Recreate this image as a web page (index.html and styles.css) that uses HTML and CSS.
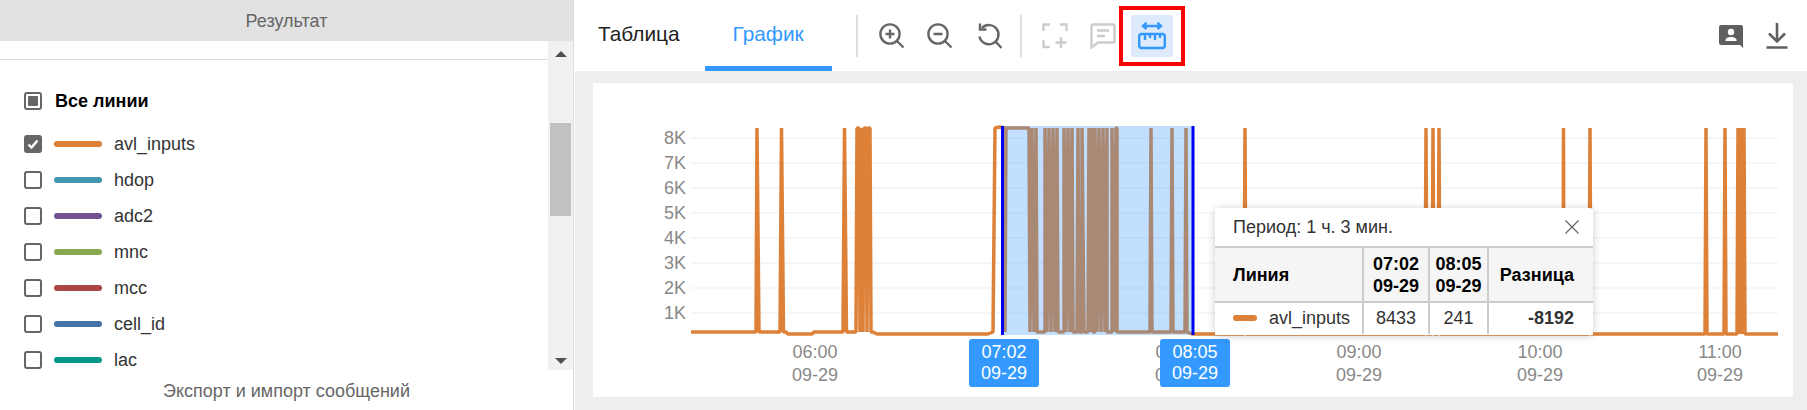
FILE: index.html
```html
<!DOCTYPE html>
<html lang="ru">
<head>
  <meta charset="UTF-8">
  <title>График</title>
  <link rel="stylesheet" href="styles.css">
</head>
<body>
  <aside class="side">
    <div class="side-head">Результат</div>
    <div class="side-body">
      <div class="lines">
        <div class="lines-top"></div>
        <div class="line-row line-all">
          <span class="check check-some"></span>
          <b>Все линии</b>
        </div>
        <div class="line-row">
          <span class="check check-on">
            <svg viewBox="0 0 18 18" width="18" height="18"><path d="M4.5 9.5l3 3 6-7" fill="none" stroke="#fff" stroke-width="2.4"/></svg>
          </span>
          <span class="swatch c-orange"></span>avl_inputs
        </div>
        <div class="line-row"><span class="check"></span><span class="swatch c-teal"></span>hdop</div>
        <div class="line-row"><span class="check"></span><span class="swatch c-purple"></span>adc2</div>
        <div class="line-row"><span class="check"></span><span class="swatch c-green"></span>mnc</div>
        <div class="line-row"><span class="check"></span><span class="swatch c-red"></span>mcc</div>
        <div class="line-row"><span class="check"></span><span class="swatch c-blue"></span>cell_id</div>
        <div class="line-row"><span class="check"></span><span class="swatch c-sea"></span>lac</div>
      </div>
      <div class="scrollbar">
        <span class="arrow arrow-up"></span>
        <span class="thumb"></span>
        <span class="arrow arrow-down"></span>
      </div>
    </div>
    <div class="side-foot">Экспорт и импорт сообщений</div>
  </aside>

  <main class="main">
    <div class="toolbar">
      <div class="tab tab-first">Таблица</div>
      <div class="tab tab-active">График</div>
      <span class="divider divider-a"></span>
      <button class="tool">
        <svg viewBox="0 0 26 26" class="ico"><circle cx="11" cy="11" r="9.6"/><path d="M18 18l6.5 6.5M11 6.5v9M6.500 11h9"/></svg>
      </button>
      <button class="tool">
        <svg viewBox="0 0 26 26" class="ico"><circle cx="11" cy="11" r="9.6"/><path d="M18 18l6.5 6.500M6.500 11h9"/></svg>
      </button>
      <button class="tool">
        <svg viewBox="0 0 26 26" class="ico"><path d="M6 5a9.600 9.600 0 1 1-2.500 8.500"/><path d="M4 .5V6.500h6.500M20 19l5.500 6"/></svg>
      </button>
      <span class="divider divider-b"></span>
      <button class="tool">
        <svg viewBox="0 0 26 26" class="ico ico-off"><path d="M1.500 8V1.500H8M18 1.500h6.500V8M1.500 17v7H8M19 14v11M13.500 19.500h11"/></svg>
      </button>
      <button class="tool">
        <svg viewBox="0 0 26 26" class="ico ico-off"><path d="M3 1.500h20a1.500 1.500 0 0 1 1.500 1.500v15a1.500 1.500 0 0 1-1.500 1.500H8l-6.500 5V3A1.500 1.500 0 0 1 3 1.500zM7 7.500h12M7 13h8"/></svg>
      </button>
      <button class="tool tool-active">
        <svg viewBox="0 0 28 28" class="ico ico-on"><path d="M5 4h18M8.500 .8L5 4l3.500 3.200M19.500 .8L23 4l-3.500 3.200"/><rect x="1.200" y="12" width="25.600" height="14" rx="2.500"/><path d="M7 12v6M12 12v4M17 12v6M22 12v4"/></svg>
        <span class="mark"></span>
      </button>
      <div class="toolbar-right">
        <svg viewBox="0 0 26 26" class="plain"><path d="M3 2h20a2 2 0 0 1 2 2v17.500l.3 3.500-3.300-3H3a2 2 0 0 1-2-2V4a2 2 0 0 1 2-2z" fill="#5f5f5f"/><circle cx="13" cy="9" r="3.200" fill="#fff"/><path d="M7.500 18v-1c0-2 3-3 5.500-3s5.500 1 5.500 3v1z" fill="#fff"/></svg>
        <svg viewBox="0 0 26 26" class="plain"><path d="M13 0v17M5 10.500l8 8 8-8M2.500 24.500h21" fill="none" stroke="#5f5f5f" stroke-width="2.600"/></svg>
      </div>
    </div>

    <div class="content">
      <div class="card">
        <svg class="chart" viewBox="593 83 1200 314" width="1200" height="314">
          <g class="grid">
            <path d="M691 138H1778M691 163H1778M691 188H1778M691 213H1778M691 238H1778M691 263H1778M691 288H1778M691 313H1778"/>
          </g>
          <g class="y-labels">
            <text x="686" y="144">8K</text>
            <text x="686" y="169">7K</text>
            <text x="686" y="194">6K</text>
            <text x="686" y="219">5K</text>
            <text x="686" y="244">4K</text>
            <text x="686" y="269">3K</text>
            <text x="686" y="294">2K</text>
            <text x="686" y="319">1K</text>
          </g>
          <polyline class="series" points="691,332 756,332 757,128 759,332 780,332 781.500,128 783.500,332 786,332 788,334 812,334 814,332 843,332 844.500,128 846.500,332 856,332 857,128 859,128 860,332 861,128 863,332 864,128 866,128 867,332 868,128 870,128 871,332 873,332 877,334 988,334 993,332 995,128 1000,127 1005,128 1005,332 1006,128 1029,128 1030,332 1032,128 1034,332 1036,128 1037,332 1045,332 1045,128 1047,332 1049,128 1051,332 1053,128 1055,332 1057,128 1058,332 1064,332 1064,128 1066,332 1068,128 1070,332 1072,128 1073,332 1077,332 1078,128 1079,332 1082,332 1082,128 1084,332 1088,332 1089,128 1091,332 1092,128 1093,332 1095,332 1095,128 1097,332 1099,128 1101,332 1103,128 1105,332 1107,128 1107,332 1112,332 1112,128 1114,332 1116,128 1117,128 1117,332 1150,332 1151,128 1152,332 1171,332 1172,128 1173,332 1185,332 1186,128 1187,332 1192,334 1244,334 1245,128 1246,334 1425,334 1426,128 1427,334 1432,334 1433,128 1434,334 1438,334 1439,128 1440,334 1563,334 1563.500,128 1564,334 1589,334 1590,128 1591,334 1705,334 1706,128 1707,334 1724,334 1725,128 1726,334 1737,334 1738,128 1740,334 1741,128 1743,334 1744,128 1745,334 1778,334"/>
          <rect class="range" x="1002" y="126" width="192" height="209"/>
          <path class="range-edge" d="M1002.500 126V335M1193 126V335"/>
          <g class="x-labels">
            <text x="815" y="358">06:00</text><text x="815" y="381">09-29</text>
            <text x="1178" y="358">08:00</text><text x="1178" y="381">09-29</text>
            <text x="1359" y="358">09:00</text><text x="1359" y="381">09-29</text>
            <text x="1540" y="358">10:00</text><text x="1540" y="381">09-29</text>
            <text x="1720" y="358">11:00</text><text x="1720" y="381">09-29</text>
          </g>
          <rect class="tag" x="969" y="339" width="70" height="48" rx="3"/>
          <rect class="tag" x="1160" y="339" width="70" height="48" rx="3"/>
          <g class="tag-text">
            <text x="1004" y="358">07:02</text><text x="1004" y="379">09-29</text>
            <text x="1195" y="358">08:05</text><text x="1195" y="379">09-29</text>
          </g>
        </svg>

        <div class="period">
          <div class="period-head">
            <span>Период: 1 ч. 3 мин.</span>
            <svg viewBox="0 0 16 16" width="16" height="16"><path d="M1.500 1.500l13 13M14.500 1.500l-13 13" fill="none" stroke="#666" stroke-width="1.300"/></svg>
          </div>
          <table class="period-table">
            <thead>
              <tr>
                <th class="col-line">Линия</th>
                <th class="col-time">07:02<br>09-29</th>
                <th class="col-time2">08:05<br>09-29</th>
                <th class="col-diff">Разница</th>
              </tr>
            </thead>
            <tbody>
              <tr>
                <td class="col-line"><span class="swatch swatch-sm c-orange"></span>avl_inputs</td>
                <td>8433</td>
                <td>241</td>
                <td class="col-diff"><b>-8192</b></td>
              </tr>
            </tbody>
          </table>
        </div>
      </div>
    </div>
  </main>
</body>
</html>
```

FILE: styles.css
```css
* { box-sizing: border-box; margin: 0; padding: 0; }
html, body { height: 410px; overflow: hidden; }
body {
  display: flex;
  background: #fff;
  color: #333;
  font-family: "Liberation Sans", Arial, sans-serif;
  font-size: 18px;
}

/* левая панель */
.side {
  width: 574px;
  flex: none;
  display: flex;
  flex-direction: column;
  border-right: 1px solid #ddd;
}
.side-head {
  height: 41px;
  line-height: 42px;
  background: #e2e2e2;
  color: #666;
  text-align: center;
  font-size: 18px;
}
.side-body { display: flex; height: 329px; }
.lines { flex: 1; overflow: hidden; }
.lines-top { height: 19px; border-bottom: 1px solid #ddd; margin-bottom: 23px; }
.line-row {
  display: flex;
  align-items: center;
  height: 36px;
  padding-left: 24px;
  color: #333;
}
.line-all { margin-bottom: 7px; color: #000; }
.line-all b { margin-left: 13px; }
.check {
  width: 18px;
  height: 18px;
  flex: none;
  border: 2px solid #666;
  border-radius: 3px;
  position: relative;
}
.check-on { background: #666; }
.check-on svg { display: block; margin: -2px; }
.check-some::after {
  content: "";
  position: absolute;
  inset: 2px;
  background: #666;
  border-radius: 1px;
}
.swatch {
  width: 48px;
  height: 6px;
  flex: none;
  border-radius: 3px;
  margin: 0 12px;
}
.swatch-sm { display: inline-block; width: 24px; margin: 0 12px 0 0; vertical-align: middle; position: relative; top: -1px; }
.c-orange { background: #dd8138; }
.c-teal { background: #3f98b0; }
.c-purple { background: #705390; }
.c-green { background: #8aa84f; }
.c-red { background: #aa4643; }
.c-blue { background: #4572a7; }
.c-sea { background: #009688; }

.scrollbar {
  width: 25px;
  flex: none;
  background: #f1f1f1;
  display: flex;
  flex-direction: column;
  align-items: center;
  position: relative;
}
.thumb {
  width: 21px;
  height: 93px;
  margin-top: 66px;
  background: #c1c1c1;
}
.arrow { width: 0; height: 0; border-left: 6px solid transparent; border-right: 6px solid transparent; }
.arrow-up { border-bottom: 6px solid #505050; margin-top: 10px; }
.arrow-down { border-top: 6px solid #505050; margin-top: 142px; }
.side-foot {
  flex: 1;
  text-align: center;
  color: #666;
  font-size: 18px;
  line-height: 42px;
}

/* правая часть */
.main { flex: 1; display: flex; flex-direction: column; min-width: 0; }
.toolbar { height: 71px; display: flex; align-items: center; flex: none; }
.tab {
  height: 71px;
  line-height: 68px;
  padding: 0 28px;
  font-size: 20.800px;
  color: #222;
}
.tab-first { padding: 0 25px 0 24px; }
.tab-active { color: #3399ff; border-bottom: 5px solid #3399ff; }
.divider { width: 2px; height: 42px; background: #ddd; flex: none; }
.divider-a { margin: 0 13px 0 24px; }
.divider-b { margin: 0 12px 0 10px; }
.tool {
  width: 42px;
  height: 42px;
  margin-right: 6.5px;
  border: 0;
  border-radius: 3px;
  background: none;
  display: flex;
  align-items: center;
  justify-content: center;
  position: relative;
}
.tool:nth-of-type(3) { margin-right: 0; }
.tool-active { background: #deebfc; margin-right: 0; }
.ico {
  width: 26px;
  height: 26px;
  fill: none;
  stroke: #666;
  stroke-width: 2.400;
}
.ico-off { stroke: #ccc; }
.ico-on { width: 28px; height: 28px; stroke: #3399ff; }
.mark {
  position: absolute;
  inset: -9px -12px;
  border: 4.500px solid #f00;
}
.toolbar-right {
  margin-left: auto;
  padding-right: 17px;
  display: flex;
  gap: 20px;
}
.plain { width: 26px; height: 26px; display: block; }

.content {
  flex: 1;
  margin-left: 1px;
  padding: 12px 14px 13px 18px;
  background: #eee;
  min-height: 0;
}
.card { height: 314px; background: #fff; position: relative; }
.chart { display: block; }
.grid path { fill: none; stroke: #f3f3f3; stroke-width: 1.500; }
.y-labels text { text-anchor: end; fill: #888; font-size: 18px; }
.x-labels text { text-anchor: middle; fill: #888; font-size: 18px; }
.series {
  fill: none;
  stroke: #dd8138;
  stroke-width: 3.500;
  stroke-linejoin: bevel;
}
.range { fill: #3399ff; opacity: .3; }
.range-edge { fill: none; stroke: #0000f0; stroke-width: 3; }
.tag { fill: #3399ff; }
.tag-text text { text-anchor: middle; fill: #fff; font-size: 18px; }

/* окно периода */
.period {
  position: absolute;
  left: 622px;
  top: 125px;
  width: 378px;
  height: 127px;
  background: #fff;
  border-radius: 3px 3px 0 0;
  box-shadow: 0 1px 8px rgba(0, 0, 0, .2);
  overflow: hidden;
}
.period-head {
  height: 38px;
  padding: 0 13px 0 18px;
  display: flex;
  align-items: center;
  justify-content: space-between;
  font-size: 18px;
}
.period-table {
  width: 378px;
  table-layout: fixed;
  border-collapse: collapse;
  font-size: 18px;
}
.period-table th {
  height: 55px;
  background: #f5f5f5;
  color: #000;
  line-height: 22px;
  border-top: 2px solid #ccc;
  border-bottom: 2px solid #ccc;
}
.period-table th, .period-table td { text-align: center; border-left: 2px solid #ccc; }
.period-table td { height: 32px; white-space: nowrap; }
.period-table .col-line { width: 148px; text-align: left; padding-left: 18px; border-left: 0; }
.period-table .col-time { width: 66px; }
.period-table .col-time2 { width: 59px; }
.period-table .col-diff { text-align: right; padding-right: 19px; }
```
